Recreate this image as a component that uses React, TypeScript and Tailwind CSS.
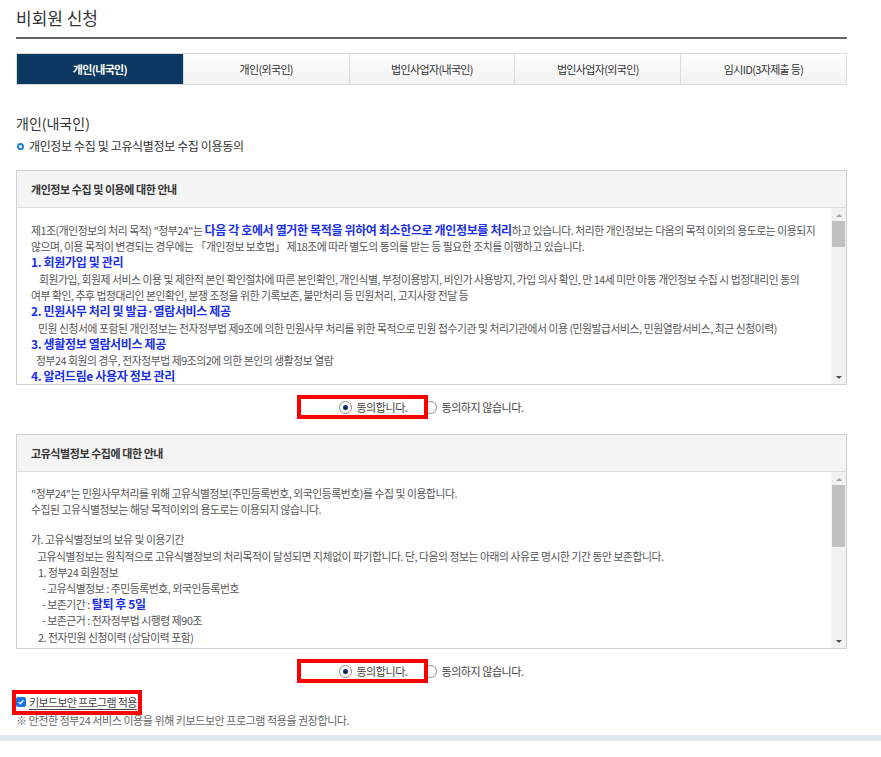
import React from "react";

const tabs = ["개인(내국인)", "개인(외국인)", "법인사업자(내국인)", "법인사업자(외국인)", "임시ID(3자제출 등)"];

function FakeScrollbar({ thumbTop, thumbHeight }: { thumbTop: number; thumbHeight: number }) {
  return (
    <div className="flex w-[15px] shrink-0 flex-col bg-[#f1f1f1]">
      <div className="flex h-[14px] items-center justify-center">
        <span className="h-0 w-0 border-x-[3px] border-b-[3px] border-x-transparent border-b-[#a3a3a3]" />
      </div>
      <div className="flex-1 px-[1px]">
        <div className="bg-[#c1c1c1]" style={{ marginTop: thumbTop, height: thumbHeight }} />
      </div>
      <div className="flex h-[14px] items-center justify-center">
        <span className="h-0 w-0 border-x-[3px] border-t-[3px] border-x-transparent border-t-[#505050]" />
      </div>
    </div>
  );
}

function Heading({ children }: { children: React.ReactNode }) {
  return <div className="text-[12px] leading-[16.4px] font-bold tracking-[-0.03em] text-[#1a2fe6]">{children}</div>;
}

function Line({ children, indent = "" }: { children: React.ReactNode; indent?: string }) {
  return <div className={`whitespace-nowrap leading-[16.2px] ${indent}`}>{children}</div>;
}

function RadioRow({ boxLeft }: { boxLeft: number }) {
  return (
    <div className="relative flex h-[24px] items-center justify-center gap-[3px] text-[11px] text-[#444]">
      <span className="flex h-[13px] w-[13px] items-center justify-center rounded-full border border-[#8a8a8a] bg-white">
        <span className="h-[5px] w-[5px] rounded-full bg-[#0f2a6b]" />
      </span>
      <span className="mr-[14px] ml-[1px] tracking-[-0.04em]">동의합니다.</span>
      <span className="h-[13px] w-[13px] rounded-full border border-[#8a8a8a] bg-white" />
      <span className="ml-[1px] tracking-[-0.04em]">동의하지 않습니다.</span>
      <div
        className="absolute top-0 h-[24px] w-[131px] border-4 border-[#ff0000]"
        style={{ left: boxLeft }}
      />
    </div>
  );
}

export default function App() {
  return (
    <div
      className="min-h-[757px] w-[881px] bg-white text-[#333]"
      style={{ fontFamily: '"Noto Sans CJK KR", "Noto Sans", sans-serif' }}
    >
      <div className="w-[831px] ml-[16px]">
        <h1 className="border-b-2 border-[#666] pt-[5px] pb-[6px] text-[17px] leading-[26px] text-[#333]">
          비회원 신청
        </h1>

        <div className="mt-[14px] grid h-[32px] grid-cols-5 border border-[#dcdcdc]">
          {tabs.map((t, i) => (
            <div
              key={t}
              className={
                i === 0
                  ? "flex items-center justify-center bg-[#0c3861] text-[11px] font-bold tracking-[-0.06em] text-white"
                  : "flex items-center justify-center border-l border-[#dcdcdc] bg-linear-to-b from-white to-[#f2f2f2] text-[11px] tracking-[-0.06em] text-[#333]"
              }
            >
              {t}
            </div>
          ))}
        </div>

        <div className="mt-[28px] text-[14px] leading-[20px] text-[#333]">개인(내국인)</div>
        <div className="mt-[4px] flex items-center gap-[5px] text-[12px] leading-[18px] text-[#333]">
          <span className="ml-[1px] h-[7px] w-[7px] rounded-full border-2 border-[#1d7fd6]" />
          <span className="tracking-[-0.03em]">개인정보 수집 및 고유식별정보 수집 이용동의</span>
        </div>

        {/* 개인정보 수집 및 이용 */}
        <div className="mt-[15px] border border-[#cfcfcf]">
          <div className="flex h-[37px] items-center border-b border-[#dcdcdc] bg-[#f4f4f4] px-[14px] text-[11px] font-bold tracking-[-0.04em] text-[#333]">
            개인정보 수집 및 이용에 대한 안내
          </div>
          <div className="flex h-[176px]">
            <div className="flex-1 overflow-hidden px-[14px] pt-[14px] text-[10.8px] tracking-[-0.04em] text-[#555]">
              <Line>
                제1조(개인정보의 처리 목적) "정부24"는{" "}
                <span className="text-[12px] font-bold tracking-[-0.03em] text-[#1a2fe6]">
                  다음 각 호에서 열거한 목적을 위하여 최소한으로 개인정보를 처리
                </span>
                하고 있습니다. 처리한 개인정보는 다음의 목적 이외의 용도로는 이용되지
              </Line>
              <Line>
                않으며, 이용 목적이 변경되는 경우에는 「개인정보 보호법」 제18조에 따라 별도의 동의를 받는 등 필요한 조치를 이행하고 있습니다.
              </Line>
              <Heading>1. 회원가입 및 관리</Heading>
              <Line indent="pl-[8px]">
                회원가입, 회원제 서비스 이용 및 제한적 본인 확인절차에 따른 본인확인, 개인식별, 부정이용방지, 비인가 사용방지, 가입 의사 확인, 만 14세 미만 아동 개인정보 수집 시 법정대리인 동의
              </Line>
              <Line>여부 확인, 추후 법정대리인 본인확인, 분쟁 조정을 위한 기록보존, 불만처리 등 민원처리, 고지사항 전달 등</Line>
              <Heading>2. 민원사무 처리 및 발급·열람서비스 제공</Heading>
              <Line indent="pl-[7px]">
                민원 신청서에 포함된 개인정보는 전자정부법 제9조에 의한 민원사무 처리를 위한 목적으로 민원 접수기관 및 처리기관에서 이용 (민원발급서비스, 민원열람서비스, 최근 신청이력)
              </Line>
              <Heading>3. 생활정보 열람서비스 제공</Heading>
              <Line indent="pl-[5px]">정부24 회원의 경우, 전자정부법 제9조의2에 의한 본인의 생활정보 열람</Line>
              <Heading>4. 알려드림e 사용자 정보 관리</Heading>
            </div>
            <FakeScrollbar thumbTop={-1} thumbHeight={26} />
          </div>
        </div>

        <div className="mt-[10px]">
          <RadioRow boxLeft={281} />
        </div>

        {/* 고유식별정보 수집 */}
        <div className="mt-[15px] border border-[#cfcfcf]">
          <div className="flex h-[37px] items-center border-b border-[#dcdcdc] bg-[#f4f4f4] px-[14px] text-[11px] font-bold tracking-[-0.04em] text-[#333]">
            고유식별정보 수집에 대한 안내
          </div>
          <div className="flex h-[176px]">
            <div className="flex-1 overflow-hidden px-[14px] pt-[13px] text-[10.8px] tracking-[-0.04em] text-[#555]">
              <Line>"정부24"는 민원사무처리를 위해 고유식별정보(주민등록번호, 외국인등록번호)를 수집 및 이용합니다.</Line>
              <Line>수집된 고유식별정보는 해당 목적이외의 용도로는 이용되지 않습니다.</Line>
              <div className="h-[14px]" />
              <Line>가. 고유식별정보의 보유 및 이용기간</Line>
              <Line indent="pl-[6px]">
                고유식별정보는 원칙적으로 고유식별정보의 처리목적이 달성되면 지체없이 파기합니다. 단, 다음의 정보는 아래의 사유로 명시한 기간 동안 보존합니다.
              </Line>
              <Line indent="pl-[7px]">1. 정부24 회원정보</Line>
              <Line indent="pl-[11px]">- 고유식별정보 : 주민등록번호, 외국인등록번호</Line>
              <Line indent="pl-[11px]">
                - 보존기간 : <span className="text-[12px] font-bold text-[#1a2fe6]">탈퇴 후 5일</span>
              </Line>
              <Line indent="pl-[11px]">- 보존근거 : 전자정부법 시행령 제90조</Line>
              <Line indent="pl-[7px]">2. 전자민원 신청이력 (상담이력 포함)</Line>
              <Line indent="pl-[11px]">- 고유식별정보 : 주민등록번호, 외국인등록번호</Line>
            </div>
            <FakeScrollbar thumbTop={-1} thumbHeight={62} />
          </div>
        </div>

        <div className="mt-[10px]">
          <RadioRow boxLeft={281} />
        </div>

        <div className="relative mt-[8px] flex h-[22px] items-center gap-[3px] text-[11px] text-[#444]">
          <span className="flex h-[10px] w-[10px] items-center justify-center rounded-[2px] bg-[#1a73e8]">
            <svg viewBox="0 0 10 10" className="h-[8px] w-[8px]">
              <path d="M2 5.2 L4.1 7.2 L8 2.8" fill="none" stroke="white" strokeWidth="1.6" />
            </svg>
          </span>
          <span className="underline underline-offset-2 tracking-[-0.06em]">키보드보안 프로그램 적용</span>
          <div className="absolute top-[-1px] left-[-4px] h-[25px] w-[130px] border-4 border-[#ff0000]" />
        </div>
        <div className="text-[11px] leading-[14px] tracking-[-0.04em] text-[#666]">
          ※ 안전한 정부24 서비스 이용을 위해 키보드보안 프로그램 적용을 권장합니다.
        </div>
      </div>

      <div className="mt-[8px] h-[6px] w-full bg-[#e3e9f1]" />
    </div>
  );
}
